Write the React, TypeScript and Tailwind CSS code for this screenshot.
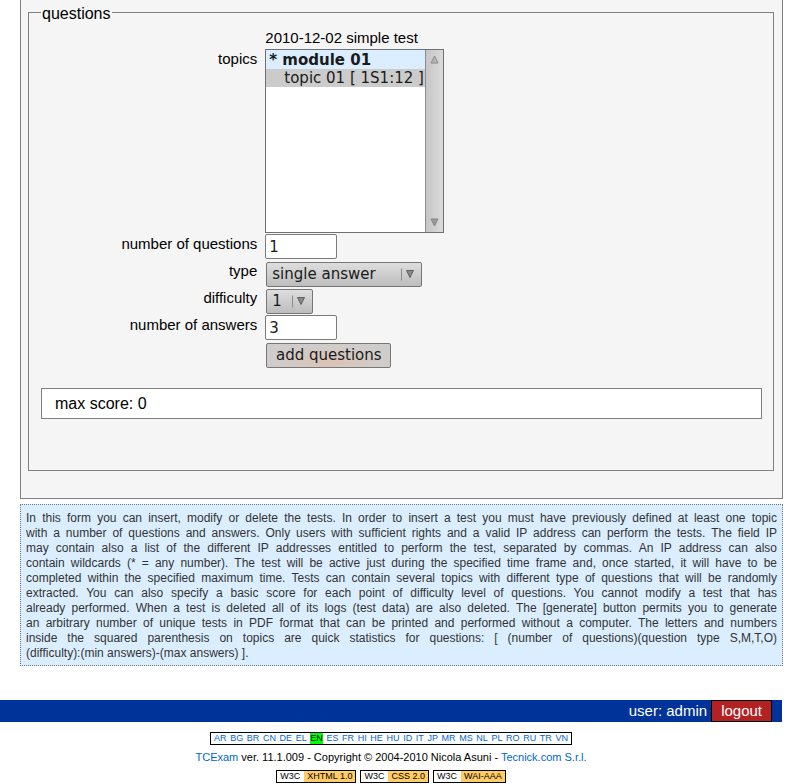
import React from "react";

const languages = [
  "AR", "BG", "BR", "CN", "DE", "EL", "EN", "ES", "FR", "HI", "HE", "HU",
  "ID", "IT", "JP", "MR", "MS", "NL", "PL", "RO", "RU", "TR", "VN",
];

const badges = ["XHTML 1.0", "CSS 2.0", "WAI-AAA"];

const helpLines = [
  "In this form you can insert, modify or delete the tests. In order to insert a test you must have previously defined at least one topic",
  "with a number of questions and answers. Only users with sufficient rights and a valid IP address can perform the tests. The field IP",
  "may contain also a list of the different IP addresses entitled to perform the test, separated by commas. An IP address can also",
  "contain wildcards (* = any number). The test will be active just during the specified time frame and, once started, it will have to be",
  "completed within the specified maximum time. Tests can contain several topics with different type of questions that will be randomly",
  "extracted. You can also specify a basic score for each point of difficulty level of questions. You cannot modify a test that has",
  "already performed. When a test is deleted all of its logs (test data) are also deleted. The [generate] button permits you to generate",
  "an arbitrary number of unique tests in PDF format that can be printed and performed without a computer. The letters and numbers",
  "inside the squared parenthesis on topics are quick statistics for questions: [ (number of questions)(question type S,M,T,O)",
  "(difficulty):(min answers)-(max answers) ].",
];

const controlFont = "font-['DejaVu_Sans',sans-serif] text-[15px] text-[#1a1a1a]";

function Row({ id, label, children }: { id?: string; label?: string; children: React.ReactNode }) {
  return (
    <div className="flex gap-2">
      <div className="w-[30%] shrink-0 text-right leading-5">
        {label && <label htmlFor={id}>{label}</label>}
      </div>
      <div className="min-w-0">{children}</div>
    </div>
  );
}

function NumberBox({ id, value }: { id: string; value: string }) {
  return (
    <div className="h-[27px]">
      <input
        id={id}
        type="text"
        defaultValue={value}
        className={`block h-[25px] w-[72px] rounded-[2px] border border-[#7b7b7b] bg-white px-[3px] ${controlFont}`}
      />
    </div>
  );
}

function Dropdown({ id, options, width }: { id: string; options: string[]; width: string }) {
  return (
    <div className="h-[27px] pl-px pt-px">
      <div className={`relative h-[25px] ${width}`}>
        <select
          id={id}
          className={`block h-full w-full appearance-none rounded-[2px] border border-[#777] bg-linear-to-b from-[#dedede] to-[#bdbdbd] pl-[5px] ${controlFont}`}
        >
          {options.map((o) => (
            <option key={o}>{o}</option>
          ))}
        </select>
        <svg className="pointer-events-none absolute top-1.5 right-[6px]" width="16" height="13" viewBox="0 0 16 13" aria-hidden="true">
          <path d="M1.500 0.500V12.500" stroke="#8c8c8c" fill="none" />
          <path d="M6.500 2.500H13.500L10 9.500Z" fill="#888" stroke="#5f5f5f" />
        </svg>
      </div>
    </div>
  );
}

function TopicList() {
  return (
    <div className="flex h-[184px] w-[179px] border border-[#6e7074] bg-white">
      <select
        id="topics"
        size={10}
        className={`h-full min-w-0 flex-1 appearance-none overflow-hidden border-0 bg-white p-0 outline-none ${controlFont}`}
      >
        <option value="m1" className="h-[19px] min-h-0 bg-[#dbeeff] px-[3px] pt-px pb-0 font-bold leading-[18px]">
          * module 01
        </option>
        <option value="t1" className="h-[18px] min-h-0 bg-[#cbcbcb] py-0 pr-0 pl-[18px] leading-[18px]">
          topic 01 [ 1S1:12 ]
        </option>
      </select>
      <div className="flex w-[18px] flex-col items-center justify-between border-l border-[#8d8d8d] bg-linear-to-r from-[#c6c6c6] to-[#dadada] py-[5px]">
        <svg width="9" height="9" viewBox="0 0 9 9" aria-hidden="true">
          <path d="M1 8H8L4.500 1Z" fill="#b5b5b5" stroke="#8a8a8a" />
        </svg>
        <svg width="9" height="9" viewBox="0 0 9 9" aria-hidden="true">
          <path d="M1 1H8L4.500 8Z" fill="#999" stroke="#858585" />
        </svg>
      </div>
    </div>
  );
}

export default function App() {
  return (
    <div className="bg-white pr-1.5 font-['Liberation_Sans',Arial,sans-serif] text-black">
      <form className="ml-5 border-x border-b border-[#808080] bg-[#f5f5f5] pr-2 pb-[27px] pl-[7px]" onSubmit={(e) => e.preventDefault()}>
        <fieldset className="min-w-0 border border-[#808080] pr-[11px] pb-[51px] pl-3 text-[15px]">
          <legend className="px-px pt-[3px] text-base leading-[21px]">questions</legend>
          <div className="pt-1">
            <Row>
              <div className="pb-px leading-5">2010-12-02 simple test</div>
            </Row>
            <Row id="topics" label="topics">
              <TopicList />
            </Row>
          </div>
          <div className="pt-px">
            <Row id="questions" label="number of questions">
              <NumberBox id="questions" value="1" />
            </Row>
            <Row id="type" label="type">
              <Dropdown id="type" options={["single answer"]} width="w-[156px]" />
            </Row>
            <Row id="difficulty" label="difficulty">
              <Dropdown id="difficulty" options={["1"]} width="w-[47px]" />
            </Row>
            <Row id="answers" label="number of answers">
              <NumberBox id="answers" value="3" />
            </Row>
            <Row>
              <div className="h-[27px] pl-px pt-px">
                <button
                  type="submit"
                  className={`block h-[25px] w-[125px] rounded-[2px] border border-[#777] bg-[radial-gradient(ellipse_at_50%_80%,#dcc2b4_0%,#cfcdcc_65%)] text-center whitespace-nowrap ${controlFont}`}
                >
                  add questions
                </button>
              </div>
            </Row>
          </div>
          <div className="mt-[19px] h-[31px] border border-[#808080] bg-white px-[13px] text-base leading-[29px]">
            max score: 0
          </div>
        </fieldset>
      </form>

      <p className="mt-[5px] ml-5 border border-dotted border-[#667788] bg-[#dbeeff] px-[5px] pt-1.5 pb-1 text-justify text-xs leading-[15px] text-[#333]">
        {helpLines.map((line, i) => (
          <span
            key={line}
            className={i < helpLines.length - 1 ? "block [text-align-last:justify]" : "block"}
          >
            {line}
          </span>
        ))}
      </p>

      <div className="mt-[34px] mr-px flex h-[22px] items-stretch justify-end gap-1 bg-[#003399] pr-2.5 text-[15px] text-white">
        <span className="leading-[22px]">user: admin</span>
        <a href="#logout" className="border border-black bg-[#b22222] px-[9px] leading-5">
          logout
        </a>
      </div>

      <footer className="mr-px flex flex-col items-center pt-2.5">
        <nav className="flex h-[13px] w-[362px] justify-between border border-black px-[3px] text-[9px] leading-[11px] text-[#0066cc]">
          {languages.map((l) => (
            <a key={l} href={`#${l}`} className={l === "EN" ? "bg-[#00ff00] text-black" : ""}>
              {l}
            </a>
          ))}
        </nav>
        <p className="pt-[5px] text-[11px] leading-[15px]">
          <a href="#tcexam" className="text-[#0066cc]">TCExam</a> ver. 11.1.009 - Copyright © 2004-2010 Nicola Asuni -{" "}
          <a href="#tecnick" className="text-[#0066cc]">Tecnick.com S.r.l.</a>
        </p>
        <div className="flex gap-1 pt-[5px] text-[9px] leading-[11px]">
          {badges.map((b) => (
            <a key={b} href={`#${b}`} className="flex h-[13px] border border-black">
              <span className="pr-1 pl-[3px]">W3C</span>
              <span className="bg-[#ffcc66] px-[3px]">{b}</span>
            </a>
          ))}
        </div>
      </footer>
    </div>
  );
}
